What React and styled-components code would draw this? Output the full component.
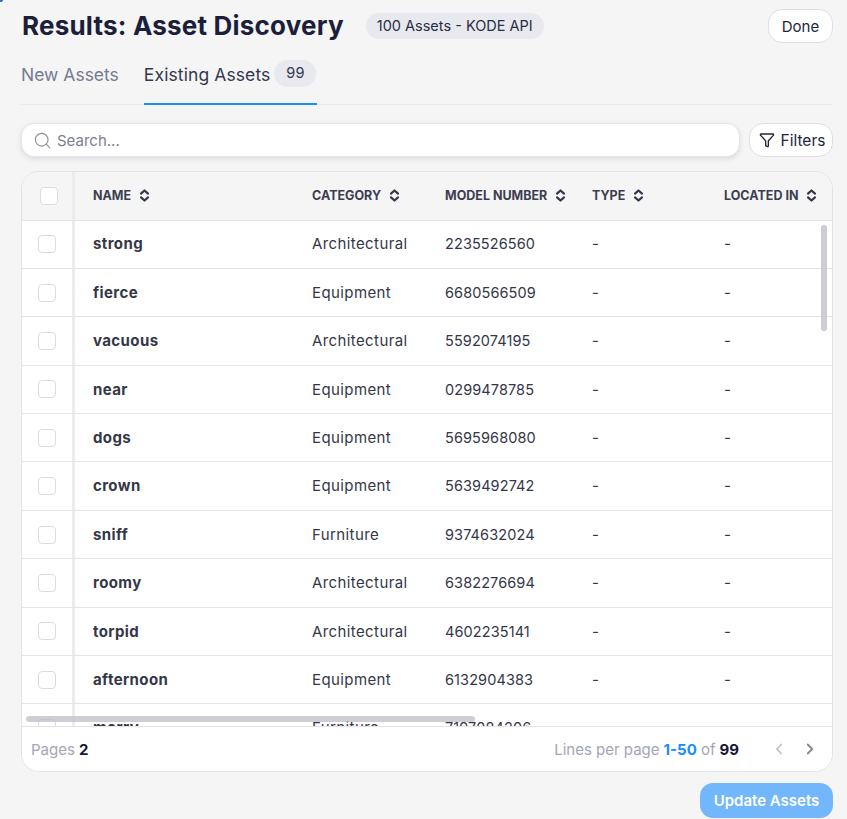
import React from 'react';
import styled, { createGlobalStyle } from 'styled-components';
import { Search, Funnel, ChevronLeft, ChevronRight } from 'lucide-react';

const GlobalStyle = createGlobalStyle`
  html, body {
    margin: 0;
    padding: 0;
    height: 100%;
    background: #f5f5f5;
  }
  body {
    font-family: Inter, "Noto Sans", "Liberation Sans", sans-serif;
    color: #2e3040;
    overflow: hidden;
  }
  * {
    box-sizing: border-box;
  }
`;

const COLUMNS = '53px 219px 133px 147px 132px 760px';

const rows = [
  ['strong', 'Architectural', '2235526560'],
  ['fierce', 'Equipment', '6680566509'],
  ['vacuous', 'Architectural', '5592074195'],
  ['near', 'Equipment', '0299478785'],
  ['dogs', 'Equipment', '5695968080'],
  ['crown', 'Equipment', '5639492742'],
  ['sniff', 'Furniture', '9374632024'],
  ['roomy', 'Architectural', '6382276694'],
  ['torpid', 'Architectural', '4602235141'],
  ['afternoon', 'Equipment', '6132904383'],
  ['merry', 'Furniture', '7197084206'],
];

const Page = styled.div`
  position: relative;
  width: 847px;
  height: 819px;
  padding: 9px 14px 0 21px;
  display: flex;
  flex-direction: column;
  overflow: hidden;
`;

const CornerMark = styled.span`
  position: absolute;
  left: 0;
  top: 0;
  width: 3px;
  height: 2px;
  border-bottom-right-radius: 2px;
  background: #1a6fd0;
`;

const Header = styled.header`
  display: flex;
  align-items: center;
  height: 34px;
`;

const Title = styled.h1`
  margin: 0 0 0 1px;
  font-size: 26px;
  letter-spacing: 0.2px;
  line-height: 34px;
  font-weight: 700;
  color: #1b1f3b;
`;

const Chip = styled.span`
  margin-left: 22px;
  height: 26px;
  padding: 0 11px 1px;
  border-radius: 13px;
  background: #e8e9ee;
  display: flex;
  align-items: center;
  font-size: 14.5px;
  color: #2a2d45;
`;

const OutlineButton = styled.button`
  height: 34px;
  background: #fff;
  border: 1px solid #dfdfe3;
  border-radius: 14px;
  font: inherit;
  font-size: 15px;
  color: #22253d;
  display: flex;
  align-items: center;
  justify-content: center;
  gap: 6px;
  padding: 0;
`;

const DoneButton = styled(OutlineButton)`
  margin-left: auto;
  width: 65px;
`;

const Tabs = styled.nav`
  margin-top: 10px;
  height: 52px;
  display: flex;
  gap: 25px;
  border-bottom: 1px solid #e9e9ec;
`;

const Tab = styled.div`
  height: 52px;
  padding-top: 8px;
  display: flex;
  align-items: flex-start;
  gap: 4px;
  width: ${p => (p.$active ? '173px' : 'auto')};
  font-size: 17.5px;
  letter-spacing: ${p => (p.$active ? '0.1px' : '0')};
  line-height: 27px;
  white-space: nowrap;
  color: ${p => (p.$active ? '#353850' : '#767b92')};
  border-bottom: ${p => (p.$active ? '2px solid #1a8cff' : '0')};
`;

const Count = styled.span`
  flex: none;
  height: 27px;
  width: 42px;
  margin-top: -1px;
  border-radius: 14px;
  background: #e8e9ee;
  text-align: center;
  font-size: 14.5px;
  line-height: 25px;
  color: #353850;
`;

const Toolbar = styled.div`
  margin-top: 18px;
  display: flex;
  gap: 9px;
`;

const SearchBox = styled.label`
  width: 719px;
  height: 34px;
  padding: 0 11px;
  display: flex;
  align-items: center;
  gap: 5px;
  background: #fff;
  border: 1px solid #e6e6e9;
  border-radius: 13px;
  box-shadow: 0 2px 5px rgba(40, 40, 60, 0.12);
  color: #8f91a1;
`;

const SearchInput = styled.input`
  flex: 1;
  border: 0;
  outline: 0;
  padding: 0;
  background: none;
  font: inherit;
  font-size: 15px;
  color: #2e3040;
  &::placeholder {
    color: #7c7e90;
    opacity: 1;
  }
`;

const FiltersButton = styled(OutlineButton)`
  width: 84px;
  padding-left: 2px;
  font-size: 15.5px;
`;

const TableCard = styled.section`
  position: relative;
  margin-top: 14px;
  width: 812px;
  height: 601px;
  background: #fff;
  border: 1px solid #e3e3e6;
  border-radius: 18px;
  overflow: hidden;
  display: flex;
  flex-direction: column;
`;

const TableScroll = styled.div`
  flex: 1;
  min-height: 0;
  overflow: hidden;
`;

const Row = styled.div`
  display: grid;
  grid-template-columns: ${COLUMNS};
  align-items: center;
  height: ${p => (p.$head ? '48.5px' : '48.4px')};
  width: 1444px;
  border-bottom: 1px solid #e4e4e7;
  background: ${p => (p.$head ? '#f5f5f6' : '#fff')};
`;

const CheckCell = styled.div`
  height: 100%;
  display: flex;
  align-items: center;
  padding-left: ${p => (p.$head ? '18px' : '16px')};
  border-right: 3px solid #ececee;
`;

const Checkbox = styled.span`
  width: 18px;
  height: 18px;
  border-radius: 4px;
  background: #fff;
  border: 1px solid #dcdce0;
`;

const Cell = styled.div`
  padding: 0 0 0.5px 18px;
  font-size: ${p => (p.$digits ? '14.5px' : '15px')};
  letter-spacing: ${p => (p.$digits ? '0.1px' : '0.4px')};
  font-weight: ${p => (p.$bold ? 700 : 400)};
  color: #353748;
  white-space: nowrap;
`;

const HeadCell = styled.div`
  padding-left: 18px;
  display: flex;
  align-items: center;
  gap: 8px;
  font-size: 12.5px;
  font-weight: 700;
  color: #3c3e50;
  white-space: nowrap;
`;

const SortIcon = styled.svg`
  width: 11px;
  height: 13px;
  flex: none;
`;

const ThumbX = styled.div`
  position: absolute;
  left: 4px;
  top: 544px;
  width: 449px;
  height: 6px;
  border-radius: 3px;
  background: rgba(190, 190, 198, 0.75);
`;

const ThumbY = styled.div`
  position: absolute;
  right: 5px;
  top: 53px;
  width: 6px;
  height: 106px;
  border-radius: 3px;
  background: #cdcdd3;
`;

const Footer = styled.footer`
  flex: none;
  height: 45px;
  padding: 0 13px 0 9px;
  display: flex;
  align-items: center;
  border-top: 1px solid #e4e4e7;
  background: #fff;
  font-size: 15px;
  color: #a3a5b8;
`;

const Strong = styled.b`
  margin-left: 4px;
  font-weight: 700;
  color: ${p => p.$color || '#15183a'};
`;

const PageInfo = styled.div`
  margin-left: auto;
  display: flex;
  align-items: center;
`;

const Pager = styled.div`
  margin-left: 31px;
  display: flex;
  align-items: center;
  gap: 13px;
`;

const Actions = styled.div`
  margin-top: 11px;
  display: flex;
  justify-content: flex-end;
`;

const PrimaryButton = styled.button`
  width: 133px;
  height: 35px;
  border: 0;
  border-radius: 13px;
  background: #72b6fb;
  color: #fff;
  font: inherit;
  font-size: 15px;
  font-weight: 600;
  padding: 0;
`;

const Sort = () => (
  <SortIcon viewBox="0 0 11 13" fill="none" stroke="#34364a" strokeWidth="2.2" strokeLinecap="round" strokeLinejoin="round">
    <path d="M2 4.6 5.5 1.5 9 4.6" />
    <path d="M2 8.4 5.5 11.5 9 8.4" />
  </SortIcon>
);

const heads = ['NAME', 'CATEGORY', 'MODEL NUMBER', 'TYPE', 'LOCATED IN'];

const App = () => (
  <Page>
    <GlobalStyle />
    <CornerMark />
    <Header>
      <Title>Results: Asset Discovery</Title>
      <Chip>100 Assets - KODE API</Chip>
      <DoneButton>Done</DoneButton>
    </Header>
    <Tabs>
      <Tab>New Assets</Tab>
      <Tab $active>
        Existing Assets <Count>99</Count>
      </Tab>
    </Tabs>
    <Toolbar>
      <SearchBox>
        <Search size={19} strokeWidth={1.5} />
        <SearchInput placeholder="Search..." />
      </SearchBox>
      <FiltersButton>
        <Funnel size={16} strokeWidth={2} />
        Filters
      </FiltersButton>
    </Toolbar>
    <TableCard>
      <TableScroll>
        <Row $head>
          <CheckCell $head>
            <Checkbox />
          </CheckCell>
          {heads.map(h => (
            <HeadCell key={h}>
              {h} <Sort />
            </HeadCell>
          ))}
        </Row>
        {rows.map(([name, category, model]) => (
          <Row key={name}>
            <CheckCell>
              <Checkbox />
            </CheckCell>
            <Cell $bold>{name}</Cell>
            <Cell>{category}</Cell>
            <Cell $digits>{model}</Cell>
            <Cell>-</Cell>
            <Cell>-</Cell>
          </Row>
        ))}
      </TableScroll>
      <ThumbX />
      <ThumbY />
      <Footer>
        Pages <Strong>2</Strong>
        <PageInfo>
          Lines per page <Strong $color="#1a8cff">1-50</Strong>&nbsp;of <Strong>99</Strong>
          <Pager>
            <ChevronLeft size={18} strokeWidth={2.4} color="#c9cad1" />
            <ChevronRight size={18} strokeWidth={2.4} color="#85868f" />
          </Pager>
        </PageInfo>
      </Footer>
    </TableCard>
    <Actions>
      <PrimaryButton>Update Assets</PrimaryButton>
    </Actions>
  </Page>
);

export default App;
